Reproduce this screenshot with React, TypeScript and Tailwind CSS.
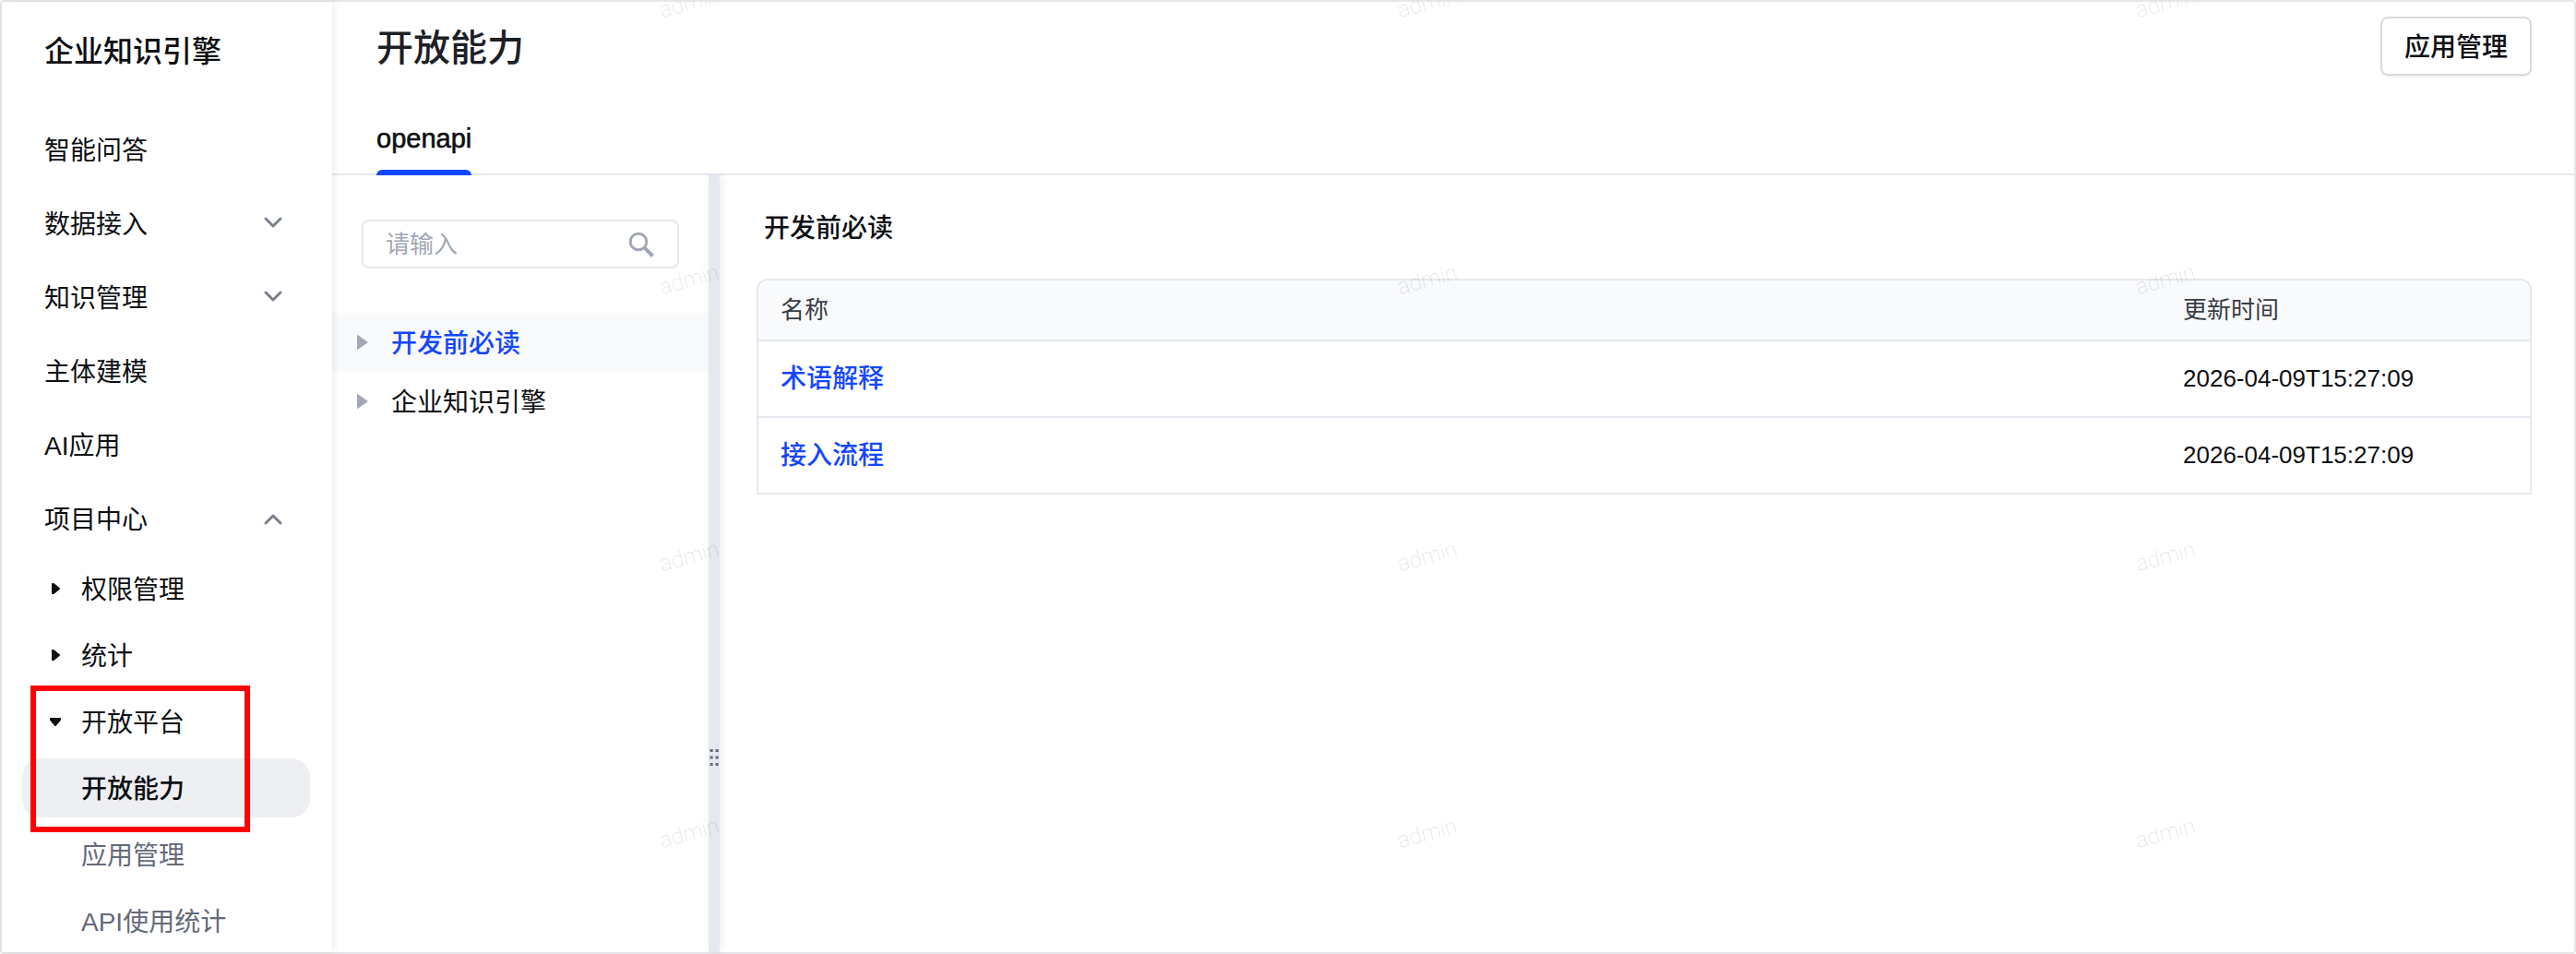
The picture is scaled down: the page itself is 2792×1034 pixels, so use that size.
import { useState } from 'react';
import clsx from 'clsx';

const topItems = [
  { label: '智能问答' },
  { label: '数据接入', arrow: 'down' },
  { label: '知识管理', arrow: 'down' },
  { label: '主体建模' },
  { label: 'AI应用' },
  { label: '项目中心', arrow: 'up' },
];

const platformPages = ['开放能力', '应用管理', 'API使用统计'];

const treeItems = ['开发前必读', '企业知识引擎'];

const docs = [
  { name: '术语解释', updatedAt: '2026-04-09T15:27:09' },
  { name: '接入流程', updatedAt: '2026-04-09T15:27:09' },
];

function Chevron({ up }: { up?: boolean }) {
  return (
    <svg viewBox="0 0 24 24" className={clsx('w-6 h-6', up && 'rotate-180')} fill="none" stroke="#78808f" strokeWidth="3" strokeLinecap="round" strokeLinejoin="round">
      <path d="M4 7l8 8 8-8" />
    </svg>
  );
}

function Caret({ open }: { open?: boolean }) {
  return (
    <svg viewBox="0 0 24 24" className={clsx('w-6 h-6', open && 'rotate-90')} fill="#0d0f12" stroke="#0d0f12" strokeWidth="2" strokeLinejoin="round">
      <path d="M9 7v10h1l6-5-6-5z" />
    </svg>
  );
}

function SubItem({ label, open }: { label: string; open?: boolean }) {
  return (
    <button className="w-full h-16 px-6 flex items-center gap-4 text-left">
      <Caret open={open} />
      <span className="pt-1">{label}</span>
    </button>
  );
}

function Sidebar() {
  return (
    <aside className="relative z-10 w-[358px] shrink-0 bg-white shadow-[2px_0_8px_rgba(0,0,0,0.08)]">
      <h1 className="h-[104px] px-[46px] pt-1 flex items-center text-[32px] font-medium">企业知识引擎</h1>
      <nav className="pt-6 pl-[22px] pr-6">
        <ul className="flex flex-col gap-4">
          {topItems.map((item) => (
            <li key={item.label}>
              <button className="w-full h-16 pl-6 pr-7 flex items-center justify-between text-left">
                <span className="pt-1">{item.label}</span>
                {item.arrow && <Chevron up={item.arrow === 'up'} />}
              </button>
            </li>
          ))}
        </ul>
        <ul className="mt-3 flex flex-col gap-2">
          <li><SubItem label="权限管理" /></li>
          <li><SubItem label="统计" /></li>
          <li className="relative">
            <SubItem label="开放平台" open />
            <ul className="mt-2 flex flex-col gap-2">
              {platformPages.map((page, i) => (
                <li key={page}>
                  <a
                    href="#"
                    className={clsx(
                      'h-16 pt-1 pl-16 flex items-center rounded-[20px]',
                      i === 0 ? 'bg-[#eeeff3] font-medium' : 'text-[#646a7a]'
                    )}
                  >
                    {page}
                  </a>
                </li>
              ))}
            </ul>
            {/* highlight around the open platform entry */}
            <div className="absolute -top-[7px] left-[9px] w-[238px] h-[159px] border-6 border-[#ff0000] pointer-events-none" />
          </li>
        </ul>
      </nav>
    </aside>
  );
}

function DocTree() {
  const [keyword, setKeyword] = useState('');
  return (
    <div className="w-[408px] shrink-0 pt-12">
      <label className="mx-8 h-[53px] px-6 flex items-center border-2 border-[#e5e8ee] rounded-lg text-[26px]">
        <input
          type="text"
          aria-label="搜索"
          placeholder="请输入"
          value={keyword}
          onChange={(e) => setKeyword(e.target.value)}
          className="flex-1 min-w-0 pt-0.5 outline-none placeholder:text-[#a2a8b5]"
        />
        <svg viewBox="0 0 28 28" className="w-7 h-7 shrink-0" fill="none" stroke="#a2a8b5" strokeWidth="3">
          <circle cx="10" cy="11" r="8.800" />
          <path d="M17 18l8.500 8.500" strokeWidth="4" />
        </svg>
      </label>
      <ul className="mt-12">
        {treeItems.map((item, i) => (
          <li key={item}>
            <button
              className={clsx(
                'w-full h-16 px-6 flex items-center gap-6 text-left',
                i === 0 && 'bg-[#f8fafc] text-[#1447ff] font-medium'
              )}
            >
              <svg viewBox="0 0 16 16" className="w-4 h-4" fill="#a2a8b5">
                <path d="M3 .8c0-.6.5-.8 1-.5l10.300 7.200c.4.300.4.700 0 1L4 15.700c-.5.300-1 .1-1-.5z" />
              </svg>
              <span className="pt-1">{item}</span>
            </button>
          </li>
        ))}
      </ul>
    </div>
  );
}

function Splitter() {
  return (
    <div className="w-3 shrink-0 bg-[#e5e8ee] flex items-center justify-center shadow-[2px_0_8px_rgba(0,0,0,0.08)]">
      <svg viewBox="0 0 10 18" className="w-[10px] h-[18px] mt-[420px]" fill="#686c7d">
        {[0, 7.5, 15].map((y) => (
          <g key={y}>
            <rect x="0.500" y={y} width="3.200" height="3" />
            <rect x="6.500" y={y} width="3.200" height="3" />
          </g>
        ))}
      </svg>
    </div>
  );
}

function DocTable() {
  return (
    <section className="flex-1 min-w-0 pt-[38px] pl-10 pr-[46px]">
      <h3 className="pl-2 leading-10 font-medium">开发前必读</h3>
      <table className="mt-[34px] w-full table-fixed border-separate border-spacing-0 border-2 border-[#e5e8ee] rounded-t-xl overflow-hidden text-left">
        <thead className="bg-[#f8fafc] text-[26px] text-[#3a3c45]">
          <tr className="h-[66px]">
            <th className="px-6 font-normal border-b-2 border-[#e5e8ee]">名称</th>
            <th className="w-[400px] px-6 font-normal border-b-2 border-[#e5e8ee]">更新时间</th>
          </tr>
        </thead>
        <tbody className="[&>tr:last-child>td]:border-b-0 [&>tr:last-child]:h-[81px]">
          {docs.map((doc) => (
            <tr key={doc.name} className="h-[83px]">
              <td className="px-6 border-b-2 border-[#e5e8ee]">
                <a href="#" className="text-[#1447ff] font-medium">{doc.name}</a>
              </td>
              <td className="px-6 border-b-2 border-[#e5e8ee] text-[26px]">{doc.updatedAt}</td>
            </tr>
          ))}
        </tbody>
      </table>
    </section>
  );
}

function Watermark() {
  return (
    <div aria-hidden="true" className="absolute inset-0 z-20 overflow-hidden pointer-events-none">
      <div className="-mt-[17px] ml-[712px] grid grid-cols-[repeat(3,800px)] auto-rows-[300px]">
        {Array.from({ length: 12 }, (_, i) => (
          <span key={i} className="w-[66px] h-9 leading-9 text-center -rotate-15 font-['Roboto'] font-extralight text-[24px] text-black/12">
            admin
          </span>
        ))}
      </div>
    </div>
  );
}

export default function App() {
  return (
    <div className="relative min-h-screen flex border-2 border-[#e6e6e8] rounded-sm bg-white text-[28px] text-[#0d0f12] font-['Liberation_Sans','Noto_Sans_CJK_SC',sans-serif]">
      <Sidebar />
      <main className="flex-1 min-w-0 flex flex-col">
        <header className="pt-4 pl-12 pr-[46px] flex items-center justify-between">
          <h2 className="pt-1 text-[40px] leading-[60px] font-medium text-[#1d1f26]">开放能力</h2>
          <button className="h-16 px-6 pt-1 border-2 border-[#d9d9d9] rounded-lg shadow-[0_2px_0_rgba(0,0,0,0.04)] font-medium">
            应用管理
          </button>
        </header>
        <div role="tablist" className="h-[108px] pl-12 flex border-b-2 border-[#e5e8ee]">
          <button
            role="tab"
            aria-selected="true"
            className="relative pt-8 text-[29px] [-webkit-text-stroke:0.6px] after:absolute after:inset-x-0 after:-bottom-[2px] after:h-[6px] after:rounded-t-md after:bg-[#1447ff]"
          >
            openapi
          </button>
        </div>
        <div className="flex-1 flex">
          <DocTree />
          <Splitter />
          <DocTable />
        </div>
      </main>
      <Watermark />
    </div>
  );
}
